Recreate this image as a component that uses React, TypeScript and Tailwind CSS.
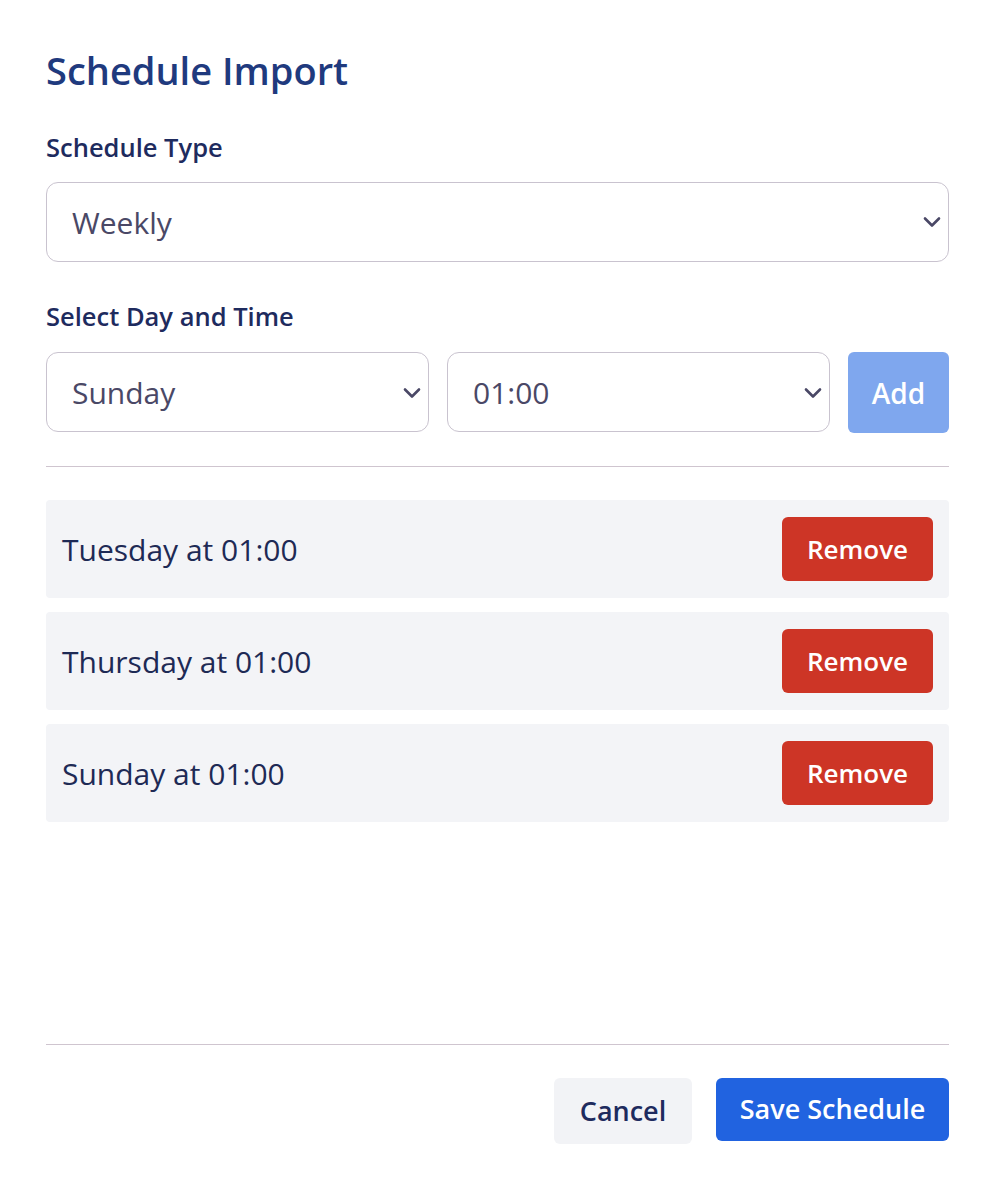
import React, { useState } from "react";

const days = ["Sunday", "Monday", "Tuesday", "Wednesday", "Thursday", "Friday", "Saturday"];
const times = Array.from({ length: 24 }, (_, i) => `${String(i).padStart(2, "0")}:00`);

const Chevron = () => (
  <svg
    className="pointer-events-none absolute right-[8px] top-1/2 -translate-y-1/2"
    width="18"
    height="18"
    viewBox="0 0 18 18"
    fill="none"
  >
    <path d="M2 5.5l7 7 7-7" stroke="#4a4866" strokeWidth="2.6" strokeLinecap="round" strokeLinejoin="round" />
  </svg>
);

const Select = ({
  value,
  options,
  onChange,
  className = "",
}: {
  value: string;
  options: string[];
  onChange: (v: string) => void;
  className?: string;
}) => (
  <div className={`relative ${className}`}>
    <select
      value={value}
      onChange={(e) => onChange(e.target.value)}
      className="h-[80px] w-full appearance-none rounded-[12px] border border-[#c9c3cf] bg-white pl-[25px] pr-10 text-[30px] text-[#4a4866] outline-none"
    >
      {options.map((o) => (
        <option key={o} value={o}>
          {o}
        </option>
      ))}
    </select>
    <Chevron />
  </div>
);

const App = () => {
  const [scheduleType, setScheduleType] = useState("Weekly");
  const [day, setDay] = useState("Sunday");
  const [time, setTime] = useState("01:00");
  const [entries, setEntries] = useState([
    { day: "Tuesday", time: "01:00" },
    { day: "Thursday", time: "01:00" },
    { day: "Sunday", time: "01:00" },
  ]);

  const exists = entries.some((e) => e.day === day && e.time === time);

  const addEntry = () => {
    if (exists) return;
    setEntries([...entries, { day, time }]);
  };

  return (
    <div
      className="flex h-[1188px] w-[990px] flex-col bg-white pl-[46px] pr-[41px]"
      style={{ fontFamily: '"Open Sans", "Noto Sans", sans-serif' }}
    >
      <h2 className="mt-[44px] text-[38px] font-semibold leading-[52px] text-[#1f3a7e]">Schedule Import</h2>

      <label className="mt-[35px] text-[25.5px] font-semibold leading-[32px] text-[#1e2b5e]">Schedule Type</label>
      <Select
        className="mt-[19px]"
        value={scheduleType}
        options={["Daily", "Weekly", "Monthly"]}
        onChange={setScheduleType}
      />

      <label className="mt-[38px] text-[25.5px] font-semibold leading-[32px] text-[#1e2b5e]">Select Day and Time</label>
      <div className="mt-[20px] flex gap-[18px]">
        <Select className="flex-1" value={day} options={days} onChange={setDay} />
        <Select className="flex-1" value={time} options={times} onChange={setTime} />
        <button
          onClick={addEntry}
          disabled={exists}
          className="h-[81px] w-[101px] rounded-[6px] bg-[#7fa7ee] text-[28px] font-semibold text-white"
        >
          Add
        </button>
      </div>

      <hr className="mt-[33px] border-t border-[#cfc5cf]" />

      <div className="mt-[33px] flex flex-1 flex-col gap-[14px]">
        {entries.map((e, i) => (
          <div
            key={`${e.day}-${e.time}-${i}`}
            className="flex h-[98px] items-center justify-between rounded-[4px] bg-[#f3f4f7] pl-[16px] pr-[16px]"
          >
            <span className="text-[30px] text-[#1e2a55]">
              {e.day} at {e.time}
            </span>
            <button
              onClick={() => setEntries(entries.filter((_, j) => j !== i))}
              className="h-[64px] w-[151px] rounded-[6px] bg-[#cd3526] text-[26px] font-semibold text-white"
            >
              Remove
            </button>
          </div>
        ))}
      </div>

      <hr className="border-t border-[#cfc5cf]" />
      <div className="mb-[44px] mt-[33px] flex justify-end gap-[24px]">
        <button className="h-[66px] w-[138px] rounded-[6px] bg-[#f2f3f6] text-[27px] font-semibold text-[#1e2b5e]">
          Cancel
        </button>
        <button className="h-[63px] w-[233px] rounded-[6px] bg-[#2163e0] text-[27px] font-semibold text-white">
          Save Schedule
        </button>
      </div>
    </div>
  );
};

export default App;
